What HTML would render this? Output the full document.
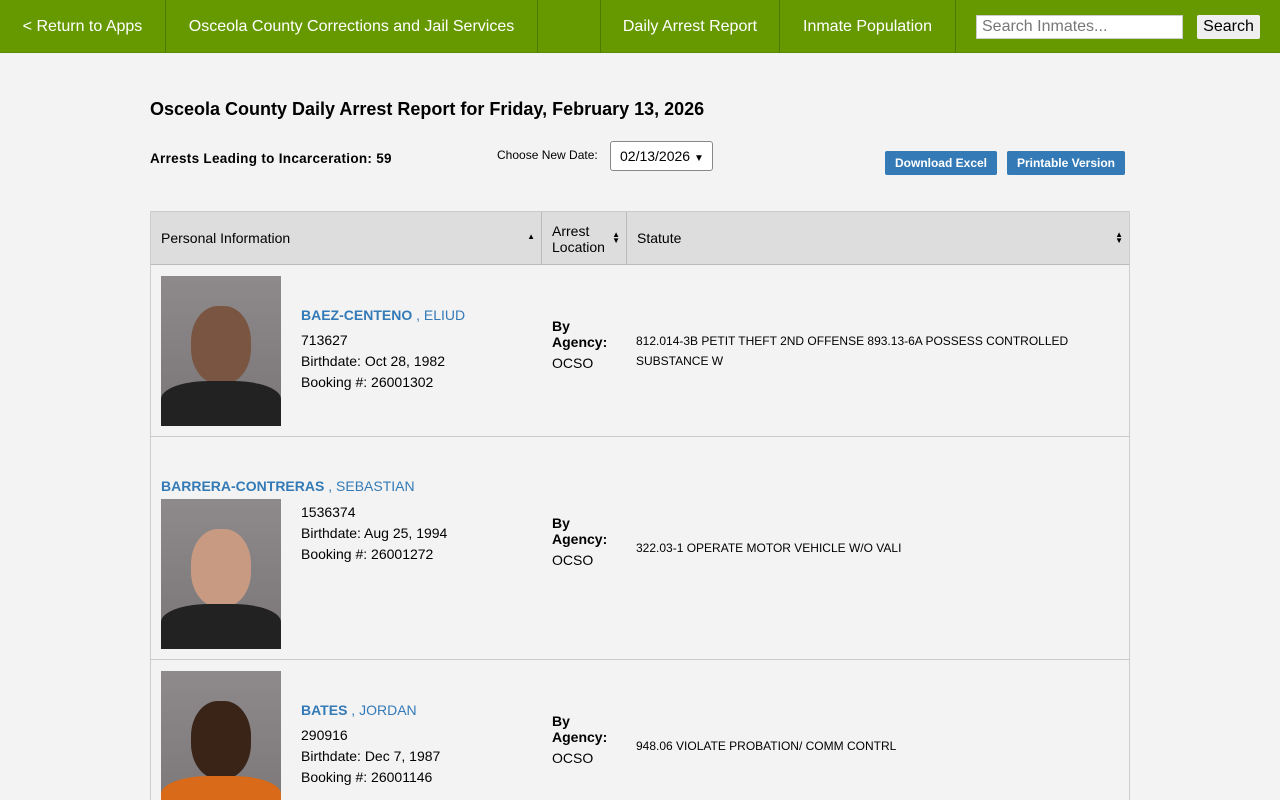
<!DOCTYPE html>
<html style="height:800px;overflow:hidden"><head><meta charset="utf-8"><style>
*{box-sizing:border-box}
body{margin:0;background:#f3f3f3;font-family:"Liberation Sans",Arial,sans-serif;width:1280px;height:800px;overflow:hidden;position:relative;color:#000}
.nav{position:absolute;top:0;left:0;width:1280px;height:53px;background:#669900;border-bottom:1px solid #5a8a00}
.nav a{position:absolute;top:0;height:53px;line-height:53px;color:#fff;font-size:16px;text-align:center;border-right:1px solid #4f7a00}
.abs{position:absolute}
.btn{position:absolute;top:151px;height:24px;background:#337ab7;color:#fff;font-size:12px;font-weight:bold;line-height:24px;text-align:center;border-radius:2px}
.tbl{position:absolute;left:150px;top:211px;width:980px;height:589px;border:1px solid #ccc;border-bottom:none;background:#f3f3f3;overflow:hidden}
.hd{position:absolute;top:0;height:53px;background:#dddddd;border-right:1px solid #bbb;border-bottom:1px solid #bbb;font-size:14px}
.row{position:absolute;left:0;width:978px;border-bottom:1px solid #ccc}
.ph{position:absolute;left:10px;width:120px;height:150px;background:linear-gradient(#8e8a8c,#7a7678);overflow:hidden}
.ph .f{position:absolute;left:30px;top:30px;width:60px;height:78px;border-radius:45%;background:#7a5642}
.ph .b{position:absolute;left:0;bottom:0;width:120px;height:45px;background:#222;border-radius:40% 40% 0 0}
.name{position:absolute;left:150px;font-size:14px;color:#337ab7}
.info{position:absolute;left:150px;font-size:14px;line-height:21px}
.ag{position:absolute;left:401px;font-size:14px;line-height:16px}
.st{position:absolute;left:485px;font-size:12px;line-height:20px}
</style></head><body>
<div class="nav">
<a style="left:0;width:166px">&lt; Return to Apps</a>
<a style="left:166px;width:372px">Osceola County Corrections and Jail Services</a>
<a style="left:538px;width:63px"></a>
<a style="left:601px;width:179px">Daily Arrest Report</a>
<a style="left:780px;width:176px">Inmate Population</a>
<div class="abs" style="left:976px;top:15px;width:207px;height:24px;background:#fff;border:1px solid #ccc;color:#777;font-size:16px;line-height:22px;padding-left:5px">Search Inmates...</div>
<div class="abs" style="left:1197px;top:15px;width:63px;height:24px;background:#efefef;border-radius:2px;font-size:16px;line-height:24px;text-align:center">Search</div>
</div>
<div class="abs" style="left:150px;top:99px;font-size:18px;font-weight:bold">Osceola County Daily Arrest Report for Friday, February 13, 2026</div>
<div class="abs" style="left:150px;top:151px;font-size:13.5px;font-weight:bold;letter-spacing:0.3px">Arrests Leading to Incarceration: 59</div>
<div class="abs" style="left:497px;top:148px;font-size:12px">Choose New Date:</div>
<div class="abs" style="left:610px;top:141px;width:103px;height:30px;background:#fff;border:1px solid #888;border-radius:3px;font-size:14px;line-height:28px;padding-left:9px">02/13/2026 <span style="font-size:10px">&#9660;</span></div>
<div class="btn" style="left:885px;width:112px">Download Excel</div>
<div class="btn" style="left:1007px;width:118px">Printable Version</div>
<div class="tbl">
<div class="hd" style="left:0;width:391px;padding:18px 10px">Personal Information<span style="position:absolute;right:6px;top:20px;font-size:8px">&#9650;</span></div>
<div class="hd" style="left:391px;width:85px;padding:11px 10px;line-height:16px">Arrest<br>Location<span style="position:absolute;right:6px;top:20px;font-size:8px;line-height:6px">&#9650;<br>&#9660;</span></div>
<div class="hd" style="left:476px;width:502px;border-right:none;padding:18px 10px">Statute<span style="position:absolute;right:6px;top:20px;font-size:8px;line-height:6px">&#9650;<br>&#9660;</span></div>
<div class="row" style="top:53px;height:172px">
<div class="ph" style="top:11px"><div class="f"></div><div class="b"></div></div>
<div class="name" style="top:42px"><b>BAEZ-CENTENO</b> , ELIUD</div>
<div class="info" style="top:65px">713627<br>Birthdate: Oct 28, 1982<br>Booking #: 26001302</div>
<div class="ag" style="top:53px"><b>By<br>Agency:</b><br><span style="line-height:26px">OCSO</span></div>
<div class="st" style="top:66px">812.014-3B PETIT THEFT 2ND OFFENSE 893.13-6A POSSESS CONTROLLED<br>SUBSTANCE W</div>
</div>
<div class="row" style="top:225px;height:223px">
<div class="name" style="top:41px;left:10px"><b>BARRERA-CONTRERAS</b> , SEBASTIAN</div>
<div class="ph" style="top:62px"><div class="f" style="background:#c89a82"></div><div class="b"></div></div>
<div class="info" style="top:65px">1536374<br>Birthdate: Aug 25, 1994<br>Booking #: 26001272</div>
<div class="ag" style="top:78px"><b>By<br>Agency:</b><br><span style="line-height:26px">OCSO</span></div>
<div class="st" style="top:101px">322.03-1 OPERATE MOTOR VEHICLE W/O VALI</div>
</div>
<div class="row" style="top:448px;height:200px;border-bottom:none">
<div class="ph" style="top:11px"><div class="f" style="background:#3a2418"></div><div class="b" style="background:#d86a1a"></div></div>
<div class="name" style="top:42px"><b>BATES</b> , JORDAN</div>
<div class="info" style="top:65px">290916<br>Birthdate: Dec 7, 1987<br>Booking #: 26001146</div>
<div class="ag" style="top:53px"><b>By<br>Agency:</b><br><span style="line-height:26px">OCSO</span></div>
<div class="st" style="top:76px">948.06 VIOLATE PROBATION/ COMM CONTRL</div>
</div>
</div>
</body></html>
